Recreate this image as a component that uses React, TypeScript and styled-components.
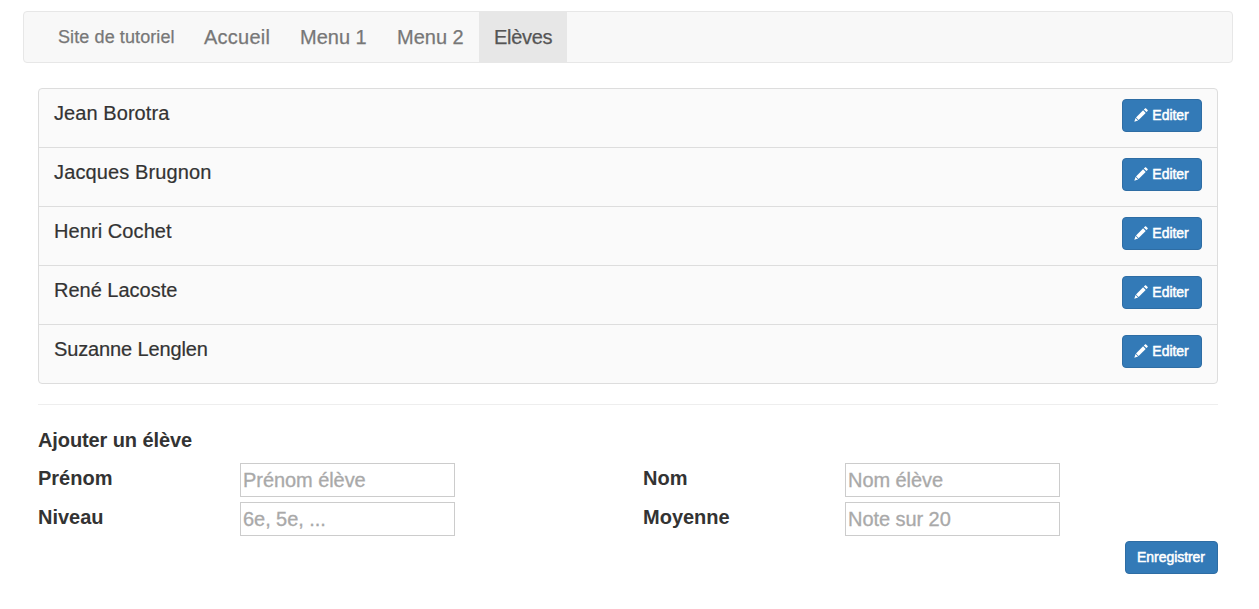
import React from 'react';
import styled, { createGlobalStyle } from 'styled-components';

const GlobalStyle = createGlobalStyle`
  *, *::before, *::after { box-sizing: border-box; }
  body {
    margin: 0;
    background: #fff;
    color: #333;
    font-family: "Helvetica Neue", Helvetica, "Liberation Sans", Arial, sans-serif;
    font-size: 20px;
    line-height: 28px;
  }
`;

const Page = styled.div`
  width: 1210px;
  margin-left: 23px;
  padding-top: 11px;
`;

const Navbar = styled.nav`
  display: flex;
  height: 52px;
  padding-left: 19px;
  background: #f8f8f8;
  border: 1px solid #e7e7e7;
  border-radius: 4px;
`;

const Brand = styled.a`
  width: 146px;
  padding: 11px 0 0 15px;
  font-size: 18px;
  letter-spacing: 0.1px;
  color: #777;
  -webkit-text-stroke: 0.25px currentColor;
  white-space: nowrap;
`;

const NavItem = styled.a<{ $width: number; $spacing?: number; $active?: boolean }>`
  width: ${(p) => p.$width}px;
  padding: 11px 0 0 15px;
  white-space: nowrap;
  letter-spacing: ${(p) => p.$spacing ?? 0}px;
  color: ${(p) => (p.$active ? '#555' : '#777')};
  -webkit-text-stroke: 0.25px currentColor;
  background: ${(p) => (p.$active ? '#e7e7e7' : 'transparent')};
`;

const Content = styled.main`
  padding: 25px 15px 0;
`;

const StudentList = styled.ul`
  list-style: none;
  margin: 0;
  padding: 0;
  background: #fafafa;
  border: 1px solid #ddd;
  border-radius: 4px;
`;

const StudentRow = styled.li`
  display: flex;
  justify-content: space-between;
  align-items: flex-start;
  height: 59px;
  padding: 10px 15px;
  & + & { border-top: 1px solid #ddd; }
  &:first-child { height: 58px; }
`;

const StudentName = styled.span<{ $spacing: number }>`
  letter-spacing: ${(p) => p.$spacing}px;
  -webkit-text-stroke: 0.2px currentColor;
`;

const Button = styled.button<{ $width: number }>`
  display: flex;
  align-items: center;
  justify-content: center;
  gap: 4px;
  width: ${(p) => p.$width}px;
  height: 33px;
  padding: 0 1px 2px 0;
  font-family: inherit;
  font-size: 14px;
  line-height: 20px;
  letter-spacing: -0.05px;
  white-space: nowrap;
  color: #fff;
  -webkit-text-stroke: 0.5px #fff;
  background: #337ab7;
  border: 1px solid #2e6da4;
  border-radius: 4px;
`;

const Icon = styled.svg`
  display: block;
  flex: none;
  fill: #fff;
`;

const Divider = styled.hr`
  height: 1px;
  margin: 20px 0 21px;
  border: 0;
  background: #eee;
`;

const FormTitle = styled.div`
  height: 37px;
  font-weight: bold;
  letter-spacing: -0.1px;
`;

const FormGrid = styled.div`
  display: grid;
  grid-template-columns: 202px 403px 202px 1fr;
  grid-auto-rows: 34px;
  row-gap: 5px;
`;

const Label = styled.label`
  padding-top: 1px;
  font-weight: bold;
`;

const Input = styled.input`
  width: 215px;
  height: 34px;
  padding: 1px 2px;
  border: 1px solid #ccc;
  border-radius: 0;
  background: #fff;
  color: #333;
  font-family: inherit;
  font-size: 20px;
  letter-spacing: -0.06px;
  &::placeholder {
    color: #a9a9a9;
    opacity: 1;
    -webkit-text-stroke: 0.3px #a9a9a9;
  }
`;

const Actions = styled.div`
  display: flex;
  justify-content: flex-end;
  padding-top: 5px;
`;

const Pencil = () => (
  <Icon width="14" height="14" viewBox="0 0 14 14">
    <path d="M11 .4c.3-.3.8-.3 1.1 0l1.5 1.5c.3.3.3.7 0 1l-1.2 1.2L9.8 1.6z" />
    <path d="M9.1 2.3l2.6 2.6-7.1 7.1L2 9.4z" />
    <path d="M1.5 9.9l2.6 2.6L.3 13.7z" />
  </Icon>
);

const students = [
  { name: 'Jean Borotra', spacing: 0.07 },
  { name: 'Jacques Brugnon', spacing: 0.13 },
  { name: 'Henri Cochet', spacing: 0.08 },
  { name: 'René Lacoste', spacing: 0 },
  { name: 'Suzanne Lenglen', spacing: -0.13 },
];

const fields = [
  { label: 'Prénom', hint: 'Prénom élève' },
  { label: 'Nom', hint: 'Nom élève' },
  { label: 'Niveau', hint: '6e, 5e, ...' },
  { label: 'Moyenne', hint: 'Note sur 20' },
];

export default function App() {
  return (
    <Page>
      <GlobalStyle />
      <Navbar>
        <Brand>Site de tutoriel</Brand>
        <NavItem $width={96} $spacing={0.24}>Accueil</NavItem>
        <NavItem $width={97}>Menu 1</NavItem>
        <NavItem $width={97}>Menu 2</NavItem>
        <NavItem $width={88} $spacing={-0.3} $active>Elèves</NavItem>
      </Navbar>
      <Content>
        <StudentList>
          {students.map(({ name, spacing }) => (
            <StudentRow key={name}>
              <StudentName $spacing={spacing}>{name}</StudentName>
              <Button $width={80}>
                <Pencil />
                Editer
              </Button>
            </StudentRow>
          ))}
        </StudentList>
        <Divider />
        <FormTitle>Ajouter un élève</FormTitle>
        <FormGrid>
          {fields.map(({ label, hint }) => (
            <React.Fragment key={label}>
              <Label htmlFor={label}>{label}</Label>
              <Input id={label} placeholder={hint} />
            </React.Fragment>
          ))}
        </FormGrid>
        <Actions>
          <Button $width={93}>Enregistrer</Button>
        </Actions>
      </Content>
    </Page>
  );
}
